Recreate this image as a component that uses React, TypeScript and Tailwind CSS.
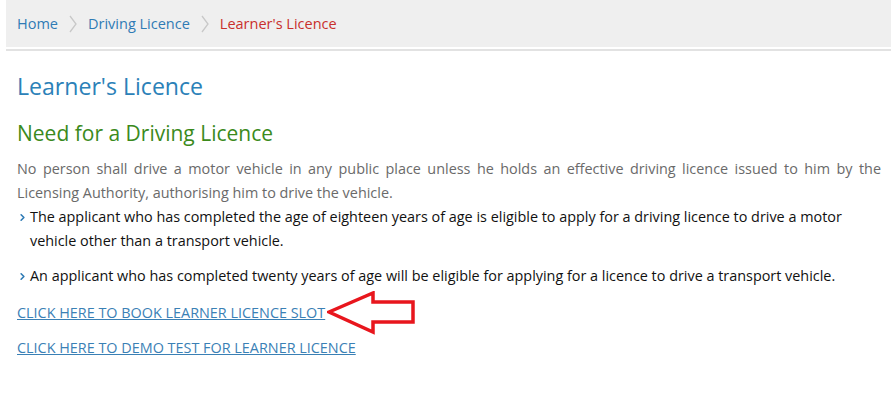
import { ChevronRight } from "lucide-react";

function Crumb() {
  return (
    <svg width="8" height="18" viewBox="0 0 8 18" className="mx-[11px]">
      <path d="M1 1 L7 9 L1 17" fill="none" stroke="#c8c8c8" strokeWidth="1.3" />
    </svg>
  );
}

function Arrow() {
  return (
    <svg width="90" height="44" viewBox="0 0 90 44" className="ml-[2px] -my-[10px]">
      <polygon
        points="2,21 46,2 46,11 86,11 86,31 46,31 46,41"
        fill="white"
        stroke="#e8161d"
        strokeWidth="3.5"
        strokeLinejoin="miter"
      />
    </svg>
  );
}

export default function App() {
  const font = { fontFamily: "'Open Sans', sans-serif" };

  return (
    <div className="w-[891px] h-[400px] bg-white" style={font}>
      <div className="ml-[6px] h-[47px] bg-[#efefef] flex items-center pl-[11px] text-[14.5px]">
        <a className="text-[#2f7bb5]">Home</a>
        <Crumb />
        <a className="text-[#2f7bb5]">Driving Licence</a>
        <Crumb />
        <span className="text-[#c9302c]">Learner's Licence</span>
      </div>
      <div className="ml-[6px] mt-[2px] h-[2px] bg-[#e2e2e2]" />

      <div className="pl-[17px] pr-[10px]">
        <h1 className="text-[23.1px] text-[#2b81b8] mt-[20px] leading-[30px]">Learner's Licence</h1>
        <h2 className="text-[21px] text-[#3b8a1c] mt-[18px] leading-[28px]">Need for a Driving Licence</h2>

        <p className="text-[14.4px] text-[#6a6a6a] leading-[24px] mt-[10px]">
          <span className="block text-justify [text-align-last:justify]">
            No person shall drive a motor vehicle in any public place unless he holds an effective driving licence
            issued to him by the
          </span>
          <span className="block">Licensing Authority, authorising him to drive the vehicle.</span>
        </p>

        <ul className="text-[14.4px] text-[#111] leading-[24px]">
          <li className="flex">
            <ChevronRight size={11} strokeWidth={3.5} className="text-[#2f7bb5] mt-[7px] mr-[1px] shrink-0" />
            <span className="pl-[1px]">
              The applicant who has completed the age of eighteen years of age is eligible to apply for a driving
              licence to drive a motor vehicle other than a transport vehicle.
            </span>
          </li>
          <li className="flex mt-[11px]">
            <ChevronRight size={11} strokeWidth={3.5} className="text-[#2f7bb5] mt-[7px] mr-[1px] shrink-0" />
            <span className="pl-[1px]">
              An applicant who has completed twenty years of age will be eligible for applying for a licence to drive
              a transport vehicle.
            </span>
          </li>
        </ul>

        <div className="flex items-center mt-[13px] text-[14.4px] leading-[24px]">
          <a href="#" className="text-[#3a80b5] underline">CLICK HERE TO BOOK LEARNER LICENCE SLOT</a>
          <Arrow />
        </div>
        <div className="mt-[11px] text-[14.4px] leading-[24px]">
          <a href="#" className="text-[#3a80b5] underline">CLICK HERE TO DEMO TEST FOR LEARNER LICENCE</a>
        </div>
      </div>
    </div>
  );
}
